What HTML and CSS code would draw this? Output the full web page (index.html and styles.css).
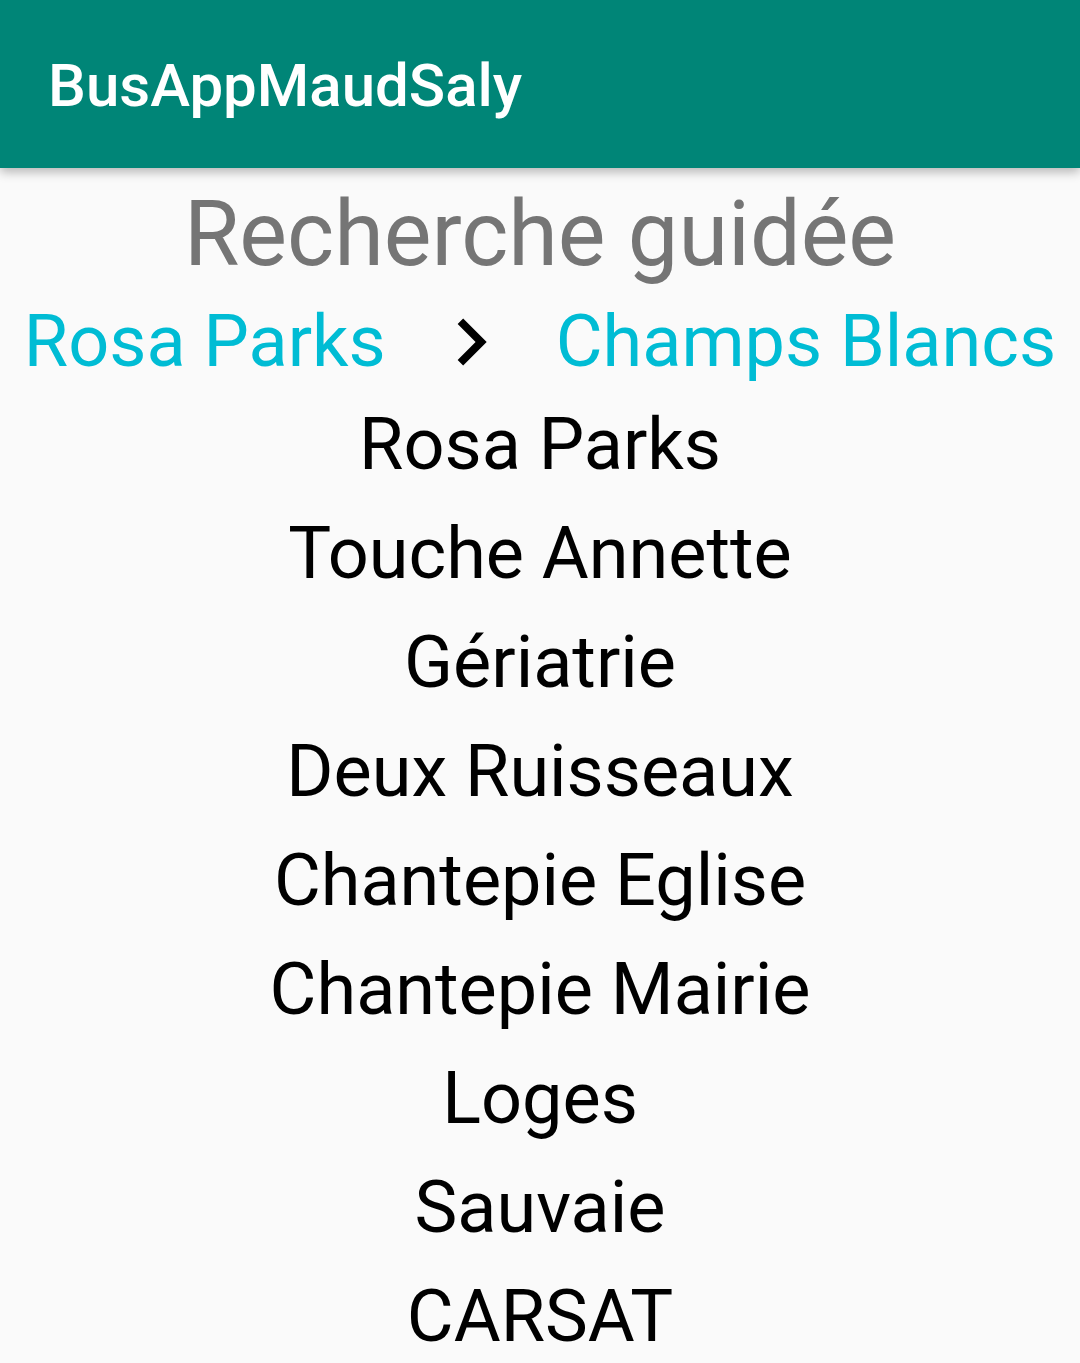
FILE: index.html
```html
<!DOCTYPE html>
<html lang="fr">
<head>
<meta charset="utf-8">
<title>BusAppMaudSaly</title>
<link rel="stylesheet" href="styles.css">
</head>
<body>
<header class="toolbar">
  <h1 class="toolbar-title">BusAppMaudSaly</h1>
</header>
<main class="content">
  <h2 class="heading">Recherche guidée</h2>
  <div class="route">
    <span class="route-stop">Rosa Parks</span>
    <svg class="chevron" viewBox="0 0 24 24" aria-hidden="true"><path d="M10 6L8.59 7.41 13.17 12l-4.58 4.59L10 18l6-6z"/></svg>
    <span class="route-stop">Champs Blancs</span>
  </div>
  <ul class="stops">
    <li>Rosa Parks</li>
    <li>Touche Annette</li>
    <li>Gériatrie</li>
    <li>Deux Ruisseaux</li>
    <li>Chantepie Eglise</li>
    <li>Chantepie Mairie</li>
    <li>Loges</li>
    <li>Sauvaie</li>
    <li>CARSAT</li>
  </ul>
</main>
</body>
</html>
```
FILE: styles.css
```css
html, body {
  margin: 0;
  padding: 0;
}
body {
  background: #fafafa;
  font-family: Roboto, "Liberation Sans", sans-serif;
  width: 1080px;
  height: 1363px;
  overflow: hidden;
}
.toolbar {
  height: 168px;
  box-sizing: border-box;
  background: #008577;
  display: flex;
  align-items: center;
  padding: 4px 0 0 48px;
  box-shadow: 0 4px 10px rgba(0, 0, 0, 0.28);
  position: relative;
  z-index: 1;
}
.toolbar-title {
  margin: 0;
  color: #ffffff;
  font-size: 60px;
  font-weight: 500;
  line-height: 1;
}
.content {
  display: flex;
  flex-direction: column;
  align-items: center;
}
.heading {
  margin: 14px 0 0;
  font-size: 90px;
  font-weight: 400;
  color: #757575;
  line-height: 106px;
}
.route {
  margin-top: 12px;
  display: flex;
  align-items: center;
  justify-content: center;
  gap: 38px;
  height: 84px;
}
.route-stop {
  font-size: 72px;
  color: #00bcd4;
  line-height: 84px;
}
.chevron {
  width: 94px;
  height: 94px;
  fill: #000000;
}
.stops {
  list-style: none;
  margin: 6px 0 0;
  padding: 0;
  text-align: center;
}
.stops li {
  font-size: 72px;
  line-height: 109px;
  color: #000000;
}
```
